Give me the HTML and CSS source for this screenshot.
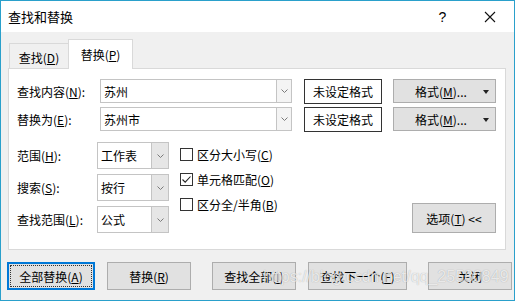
FILE: index.html
```html
<!DOCTYPE html>
<html lang="zh-CN">
<head>
  <meta charset="UTF-8">
  <title>查找和替换</title>
  <link rel="stylesheet" href="styles.css">
</head>
<body>
  <div class="window">
    <div class="titlebar">
      <span class="title">查找和替换</span>
      <span class="help">?</span>
      <span class="close-x">
        <svg width="12" height="12" viewBox="0 0 12 12"><path d="M1 1 L11 11 M11 1 L1 11" stroke="#111" stroke-width="1.1" fill="none"/></svg>
      </span>
    </div>

    <div class="tabs">
      <div class="tab">查找(<u>D</u>)</div>
      <div class="tab active">替换(<u>P</u>)</div>
    </div>

    <div class="panel">
      <div class="row">
        <label class="label-top">查找内容(<u>N</u>):</label>
        <div class="combo combo-wide">
          <span class="combo-text">苏州</span>
          <span class="combo-drop light">
            <svg width="7" height="4" viewBox="0 0 7 4"><path d="M0.5 0.5 L3.5 3.5 L6.5 0.5" stroke="#7a7a7a" fill="none"/></svg>
          </span>
        </div>
        <div class="format-box">未设定格式</div>
        <button class="format-btn">格式(<u>M</u>)... <span class="tri"></span></button>
      </div>
      <div class="row">
        <label class="label-top">替换为(<u>E</u>):</label>
        <div class="combo combo-wide">
          <span class="combo-text">苏州市</span>
          <span class="combo-drop light">
            <svg width="7" height="4" viewBox="0 0 7 4"><path d="M0.5 0.5 L3.5 3.5 L6.5 0.5" stroke="#7a7a7a" fill="none"/></svg>
          </span>
        </div>
        <div class="format-box">未设定格式</div>
        <button class="format-btn">格式(<u>M</u>)... <span class="tri"></span></button>
      </div>

      <div class="options">
        <div class="opt-left">
          <div class="opt-row">
            <label class="label-low">范围(<u>H</u>):</label>
            <div class="combo combo-small">
              <span class="combo-text">工作表</span>
              <span class="combo-drop">
                <svg width="7" height="4" viewBox="0 0 7 4"><path d="M0.5 0.5 L3.5 3.5 L6.5 0.5" stroke="#7a7a7a" fill="none"/></svg>
              </span>
            </div>
          </div>
          <div class="opt-row">
            <label class="label-low">搜索(<u>S</u>):</label>
            <div class="combo combo-small">
              <span class="combo-text">按行</span>
              <span class="combo-drop">
                <svg width="7" height="4" viewBox="0 0 7 4"><path d="M0.5 0.5 L3.5 3.5 L6.5 0.5" stroke="#7a7a7a" fill="none"/></svg>
              </span>
            </div>
          </div>
          <div class="opt-row">
            <label class="label-low">查找范围(<u>L</u>):</label>
            <div class="combo combo-small">
              <span class="combo-text">公式</span>
              <span class="combo-drop">
                <svg width="7" height="4" viewBox="0 0 7 4"><path d="M0.5 0.5 L3.5 3.5 L6.5 0.5" stroke="#7a7a7a" fill="none"/></svg>
              </span>
            </div>
          </div>
        </div>

        <div class="checks">
          <div class="check"><span class="box"></span>区分大小写(<u>C</u>)</div>
          <div class="check">
            <span class="box">
              <svg width="11" height="11" viewBox="0 0 11 11"><path d="M1.5 5.5 L4.2 8.2 L9.5 2.5" stroke="#222" stroke-width="1.1" fill="none"/></svg>
            </span>单元格匹配(<u>O</u>)
          </div>
          <div class="check"><span class="box"></span>区分全/半角(<u>B</u>)</div>
        </div>

        <button class="options-btn">选项(<u>T</u>) &lt;&lt;</button>
      </div>
    </div>

    <div class="actions">
      <div class="group">
        <button class="btn btn-default w88">全部替换(<u>A</u>)</button>
        <button class="btn w84">替换(<u>R</u>)</button>
      </div>
      <div class="group">
        <button class="btn w84">查找全部(<u>I</u>)</button>
        <button class="btn w99">查找下一个(<u>F</u>)</button>
      </div>
      <div class="group">
        <button class="btn w84">关闭</button>
      </div>
    </div>

    <div class="watermark">https://blog.csdn.net/qq_25580849</div>
  </div>
</body>
</html>
```

FILE: styles.css
```css
/* Find & replace dialog */
body {
  margin: 0;
  padding: 0;
  font-family: "Noto Sans CJK SC", "Liberation Sans", sans-serif;
  font-size: 12px;
  color: #000;
}
u {
  text-decoration: underline;
  text-underline-offset: 1px;
}
.window {
  position: relative;
  width: 515px;
  height: 301px;
  box-sizing: border-box;
  border: 1px solid #2aa0cb;
  background-color: #f0f0f0;
  overflow: hidden;
}
.titlebar {
  height: 31px;
  background-color: #fff;
  display: flex;
  align-items: center;
  padding-left: 7px;
}
.title {
  font-size: 13px;
  flex: 1;
}
.help {
  font-family: "Liberation Sans", sans-serif;
  font-size: 14px;
  width: 47px;
  text-align: center;
}
.close-x {
  width: 47px;
  display: flex;
  justify-content: center;
  margin-right: 1px;
}

/* tabs */
.tabs {
  display: flex;
  align-items: flex-end;
  margin: 8px 0 -1px 8px;
  height: 29px;
}
.tab {
  height: 26px;
  width: 59px;
  box-sizing: border-box;
  border: 1px solid #d9d9d9;
  border-bottom: none;
  border-right: none;
  display: flex;
  align-items: center;
  justify-content: center;
  padding-top: 2px;
}
.tab.active {
  position: relative;
  height: 30px;
  width: 65px;
  background-color: #fff;
  border-right: 1px solid #d9d9d9;
  z-index: 1;
  padding-top: 0;
}

/* panel */
.panel {
  margin: 0 8px 0 7px;
  height: 182px;
  box-sizing: border-box;
  border: 1px solid #d9d9d9;
  background-color: #fff;
  padding: 10px 8px 0 8px;
}
.row {
  display: flex;
  align-items: center;
  height: 24px;
  margin-bottom: 4px;
}
.label-top {
  width: 83px;
  flex: none;
}
.combo {
  display: flex;
  box-sizing: border-box;
  border: 1px solid #c4c4c4;
  background-color: #fff;
  height: 100%;
}
.combo-wide {
  width: 192px;
}
.combo-text {
  flex: 1;
  display: flex;
  align-items: center;
  padding-left: 3px;
}
.combo-drop {
  width: 15px;
  border-left: 1px solid #c4c4c4;
  background-color: #e6e6e6;
  display: flex;
  align-items: center;
  justify-content: center;
}
.combo-drop.light {
  background-color: #f4f4f4;
  width: 14px;
}
.format-box {
  width: 78px;
  height: 25px;
  box-sizing: border-box;
  border: 1px solid #333;
  margin-left: 12px;
  display: flex;
  align-items: center;
  justify-content: center;
}
.format-btn {
  width: 103px;
  height: 24px;
  margin-left: 11px;
  box-sizing: border-box;
  border: 1px solid #adadad;
  background-color: #e1e1e1;
  font: inherit;
  color: #000;
  padding: 0 0 0 21px;
  text-align: left;
  position: relative;
}
.tri {
  position: absolute;
  right: 6px;
  top: 10px;
  width: 0;
  height: 0;
  border-left: 3px solid transparent;
  border-right: 3px solid transparent;
  border-top: 4px solid #222;
}

/* options area */
.options {
  display: flex;
  margin-top: 11px;
}
.opt-left {
  display: flex;
  flex-direction: column;
  gap: 5px;
}
.opt-row {
  display: flex;
  align-items: center;
  height: 27px;
}
.label-low {
  width: 80px;
}
.combo-small {
  width: 72px;
}
.combo-small .combo-drop {
  width: 16px;
}
.checks {
  display: flex;
  flex-direction: column;
  gap: 6px;
  padding-top: 3px;
  margin-left: 11px;
}
.check {
  display: flex;
  align-items: center;
  height: 19px;
}
.box {
  width: 13px;
  height: 13px;
  box-sizing: border-box;
  border: 1px solid #333;
  background-color: #fff;
  margin-right: 4px;
  display: flex;
  align-items: center;
  justify-content: center;
}
.options-btn {
  align-self: flex-end;
  margin-left: auto;
  margin-right: 1px;
  width: 84px;
  height: 30px;
  box-sizing: border-box;
  border: 1px solid #adadad;
  background-color: #e1e1e1;
  font: inherit;
  color: #000;
}

/* bottom buttons */
.actions {
  display: flex;
  gap: 21px;
  margin: 12px 0 0 6px;
}
.group {
  display: flex;
  gap: 12px;
}
.btn {
  height: 28px;
  box-sizing: border-box;
  border: 1px solid #adadad;
  background-color: #e1e1e1;
  font: inherit;
  color: #000;
  padding: 0;
}
.btn-default {
  border: 2px solid #0078d7;
  outline: 1px dotted #333;
  outline-offset: -4px;
}
.w84 { width: 84px; }
.w88 { width: 88px; }
.w99 { width: 99px; }

.watermark {
  position: absolute;
  left: 262px;
  top: 267px;
  font-family: "Liberation Sans", sans-serif;
  font-size: 16px;
  color: rgba(255, 255, 255, 0.75);
  text-shadow: 0 0 1px rgba(0, 0, 0, 0.3);
  pointer-events: none;
}
```
